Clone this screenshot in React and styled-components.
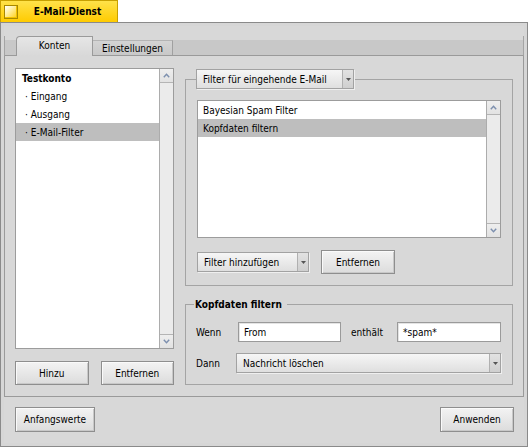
import React from 'react';
import styled, { createGlobalStyle } from 'styled-components';

const GlobalStyle = createGlobalStyle`
  html, body { margin: 0; padding: 0; background: #ffffff; }
  body {
    font-family: "DejaVu Sans Condensed", "DejaVu Sans", sans-serif;
    font-stretch: condensed;
    font-size: 10px;
    color: #000;
  }
  * { box-sizing: border-box; }
`;

const Screen = styled.div`
  width: 528px;
  height: 447px;
  display: flex;
  flex-direction: column;
  overflow: hidden;
`;

const TitleTab = styled.div`
  width: 118px;
  height: 22px;
  display: flex;
  align-items: center;
  padding-left: 3px;
  background: linear-gradient(#ffe24a, #ffcb00);
  border: 1px solid #c8a000;
  border-bottom: none;
`;

const CloseBox = styled.div`
  width: 14px;
  height: 14px;
  border: 1px solid #a88800;
  background: linear-gradient(135deg, #ffffff 0%, #fff2b0 35%, #ffcf10 100%);
  box-shadow: inset -1px -1px 0 #f0c000;
`;

const TitleText = styled.div`
  flex: 1;
  text-align: center;
  font-weight: bold;
  font-size: 10px;
`;

const Frame = styled.div`
  flex: 1;
  border: 1px solid #8a8a8a;
  padding: 3px;
  background: #d6d6d6;
  display: flex;
`;

const Window = styled.div`
  flex: 1;
  background: #d8d8d8;
  display: flex;
  flex-direction: column;
  padding-top: 10px;
`;

const TabBar = styled.div`
  height: 20px;
  display: flex;
  align-items: flex-end;
  padding-left: 11px;
  background: linear-gradient(to bottom, transparent 4px, #c8c8c8 4px);
  border-left: 1px solid #a4a4a4;
  border-right: 1px solid #a4a4a4;
  border-bottom: 1px solid #9a9a9a;
`;

const Tab = styled.div`
  width: ${p => p.$width}px;
  display: flex;
  align-items: center;
  justify-content: center;
  position: relative;
  ${p => p.$active ? `
    height: 20px;
    margin-bottom: -1px;
    border: 1px solid #9a9a9a;
    border-bottom: none;
    border-top-left-radius: 4px;
    background: linear-gradient(#e6e6e6, #d8d8d8);
    padding-bottom: 2px;
  ` : `
    height: 15px;
    border-right: 1px solid #a0a0a0;
    border-top: 1px solid #b4b4b4;
    background: linear-gradient(#d4d4d4, #c8c8c8);
  `}
`;

const ContentBox = styled.div`
  height: 341px;
  display: flex;
  gap: 11px;
  padding: 12px 10px 11px 10px;
  border: 1px solid #9a9a9a;
  border-top: none;
`;

const LeftCol = styled.div`
  width: 159px;
  display: flex;
  flex-direction: column;
  gap: 12px;
`;

const RightCol = styled.div`
  flex: 1;
  display: flex;
  flex-direction: column;
  padding-top: 1px;
  gap: 11px;
`;

const ListBox = styled.div`
  height: ${p => p.$height}px;
  border: 1px solid #9c9c9c;
  background: #fff;
  display: flex;
`;

const Rows = styled.div`
  flex: 1;
  display: flex;
  flex-direction: column;
`;

const Row = styled.div`
  height: 18px;
  display: flex;
  align-items: center;
  padding-left: ${p => p.$indent}px;
  background: ${p => (p.$selected ? '#bebebe' : 'transparent')};
  font-weight: ${p => (p.$bold ? 'bold' : 'normal')};
  white-space: pre;
`;

const Scroll = styled.div`
  width: 14px;
  border-left: 1px solid #acacac;
  background: #ececec;
  display: flex;
  flex-direction: column;
`;

const ArrowBox = styled.div`
  height: 14px;
  display: flex;
  align-items: center;
  justify-content: center;
  background: linear-gradient(#eeeeee, #e2e2e2);
  ${p => (p.$bottom ? 'border-top: 1px solid #b4b4b4;' : 'border-bottom: 1px solid #b4b4b4;')}
`;

const Track = styled.div`
  flex: 1;
  background: #ebebeb;
`;

const Chevron = ({ up }) => (
  <svg width="7" height="5" viewBox="0 0 7 5">
    <polyline
      points={up ? '0.8,4.2 3.5,1.2 6.2,4.2' : '0.8,0.8 3.5,3.8 6.2,0.8'}
      fill="none"
      stroke="#7c8fae"
      strokeWidth="1.4"
    />
  </svg>
);

const ScrollBar = () => (
  <Scroll>
    <ArrowBox><Chevron up /></ArrowBox>
    <Track />
    <ArrowBox $bottom><Chevron /></ArrowBox>
  </Scroll>
);

const ButtonRow = styled.div`
  display: flex;
  align-items: center;
  justify-content: ${p => p.$justify || 'flex-start'};
  gap: 12px;
`;

const Button = styled.div`
  width: ${p => p.$width}px;
  height: ${p => p.$height || 24}px;
  display: flex;
  align-items: center;
  justify-content: center;
  border: 1px solid #8e8e8e;
  box-shadow: inset 1px 1px 0 #fafafa, inset -1px -1px 0 #c8c8c8;
  background: linear-gradient(#f3f3f3, #dcdcdc);
  white-space: nowrap;
`;

const MenuField = styled.div`
  width: ${p => p.$width}px;
  height: 20px;
  display: flex;
  border: 1px solid #a2a2a2;
  background: linear-gradient(#f6f6f6, #dfdfdf);
  box-shadow: 1px 1px 0 #efefef;
`;

const MenuLabel = styled.div`
  flex: 1;
  display: flex;
  align-items: center;
  padding-left: 6px;
  white-space: nowrap;
`;

const MenuArrow = styled.div`
  width: 11px;
  border-left: 1px solid #b0b0b0;
  background: linear-gradient(#e2e2e2, #cfcfcf);
  display: flex;
  align-items: center;
  justify-content: center;
`;

const Menu = ({ width, children }) => (
  <MenuField $width={width}>
    <MenuLabel>{children}</MenuLabel>
    <MenuArrow>
      <svg width="5" height="3" viewBox="0 0 5 3">
        <polygon points="0,0 5,0 2.5,3" fill="#555" />
      </svg>
    </MenuArrow>
  </MenuField>
);

const GroupHeader = styled.div`
  height: ${p => p.$height}px;
  display: flex;
  &::before {
    content: '';
    width: ${p => p.$lead}px;
    margin-top: ${p => Math.floor(p.$height / 2)}px;
    border-top: 1px solid #a4a4a4;
    border-left: 1px solid #a4a4a4;
  }
  &::after {
    content: '';
    flex: 1;
    margin-top: ${p => Math.floor(p.$height / 2)}px;
    margin-left: ${p => p.$trail}px;
    border-top: 1px solid #a4a4a4;
    border-right: 1px solid #a4a4a4;
  }
`;

const GroupTitle = styled.div`
  font-weight: bold;
  display: flex;
  align-items: center;
  padding: 0 1px;
`;

const GroupBody = styled.div`
  border: 1px solid #a4a4a4;
  border-top: none;
  padding: 11px 11px 11px ${p => p.$left}px;
  display: flex;
  flex-direction: column;
  gap: ${p => p.$gap}px;
`;

const FormGrid = styled.div`
  display: grid;
  grid-template-columns: 42px 103px 56px 104px;
  grid-auto-rows: 20px;
  row-gap: 11px;
  align-items: center;
`;

const Label = styled.div`
  padding-left: ${p => p.$pad || 0}px;
`;

const TextField = styled.div`
  height: 20px;
  display: flex;
  align-items: center;
  padding-left: 5px;
  background: #fff;
  border: 1px solid #9a9a9a;
  box-shadow: inset 1px 1px 0 #e4e4e4;
`;

const WideCell = styled.div`
  grid-column: 2 / 5;
  margin-left: -2px;
  display: flex;
`;

const BottomBar = styled.div`
  flex: 1;
  display: flex;
  justify-content: space-between;
  align-items: flex-start;
  padding: 10px 10px 0 11px;
`;

export default function App() {
  return (
    <>
      <GlobalStyle />
      <Screen>
        <TitleTab>
          <CloseBox />
          <TitleText>E-Mail-Dienst</TitleText>
        </TitleTab>
        <Frame>
          <Window>
            <TabBar>
              <Tab $active $width={77}>Konten</Tab>
              <Tab $width={80}>Einstellungen</Tab>
            </TabBar>
            <ContentBox>
              <LeftCol>
                <ListBox $height={281}>
                  <Rows>
                    <Row $indent={6} $bold>Testkonto</Row>
                    <Row $indent={9}>· Eingang</Row>
                    <Row $indent={9}>· Ausgang</Row>
                    <Row $indent={9} $selected>· E-Mail-Filter</Row>
                  </Rows>
                  <ScrollBar />
                </ListBox>
                <ButtonRow $justify="space-between">
                  <Button $width={74}>Hinzu</Button>
                  <Button $width={74}>Entfernen</Button>
                </ButtonRow>
              </LeftCol>
              <RightCol>
                <div>
                  <GroupHeader $height={20} $lead={10} $trail={1}>
                    <Menu width={158}>Filter für eingehende E-Mail</Menu>
                  </GroupHeader>
                  <GroupBody $left={11} $gap={12}>
                    <ListBox $height={138}>
                      <Rows>
                        <Row $indent={5}>Bayesian Spam Filter</Row>
                        <Row $indent={5} $selected>Kopfdaten filtern</Row>
                      </Rows>
                      <ScrollBar />
                    </ListBox>
                    <ButtonRow>
                      <Menu width={112}>Filter hinzufügen</Menu>
                      <Button $width={74}>Entfernen</Button>
                    </ButtonRow>
                  </GroupBody>
                </div>
                <div>
                  <GroupHeader $height={14} $lead={8} $trail={4}>
                    <GroupTitle>Kopfdaten filtern</GroupTitle>
                  </GroupHeader>
                  <GroupBody $left={10} $gap={0}>
                    <FormGrid>
                      <Label>Wenn</Label>
                      <TextField>From</TextField>
                      <Label $pad={10}>enthält</Label>
                      <TextField>*spam*</TextField>
                      <Label>Dann</Label>
                      <WideCell>
                        <Menu width={265}>Nachricht löschen</Menu>
                      </WideCell>
                    </FormGrid>
                  </GroupBody>
                </div>
              </RightCol>
            </ContentBox>
            <BottomBar>
              <Button $width={80} $height={25}>Anfangswerte</Button>
              <Button $width={74} $height={25}>Anwenden</Button>
            </BottomBar>
          </Window>
        </Frame>
      </Screen>
    </>
  );
}
